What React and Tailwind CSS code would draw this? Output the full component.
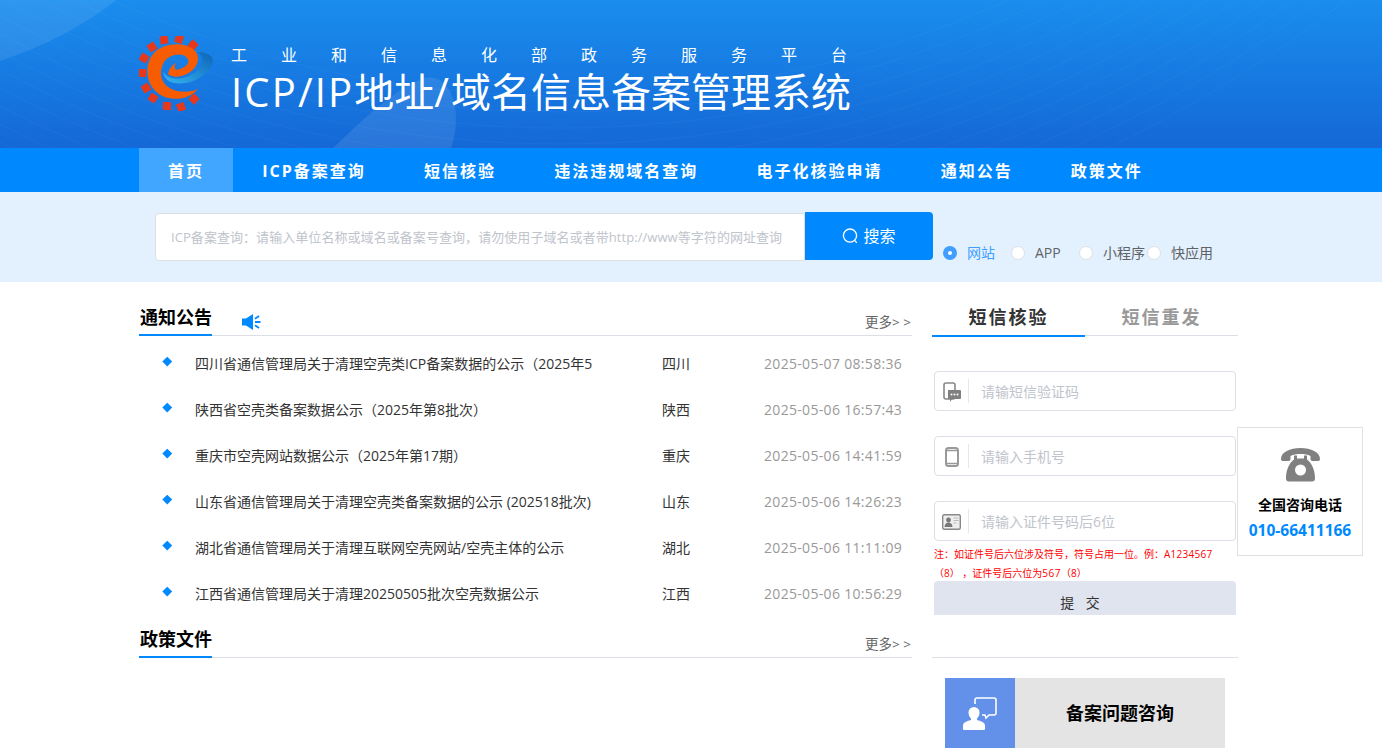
const navItems = ["首页", "ICP备案查询", "短信核验", "违法违规域名查询", "电子化核验申请", "通知公告", "政策文件"];

const notices = [
  ["四川省通信管理局关于清理空壳类ICP备案数据的公示（2025年5", "四川", "2025-05-07 08:58:36"],
  ["陕西省空壳类备案数据公示（2025年第8批次）", "陕西", "2025-05-06 16:57:43"],
  ["重庆市空壳网站数据公示（2025年第17期）", "重庆", "2025-05-06 14:41:59"],
  ["山东省通信管理局关于清理空壳类备案数据的公示 (202518批次)", "山东", "2025-05-06 14:26:23"],
  ["湖北省通信管理局关于清理互联网空壳网站/空壳主体的公示", "湖北", "2025-05-06 11:11:09"],
  ["江西省通信管理局关于清理20250505批次空壳数据公示", "江西", "2025-05-06 10:56:29"],
];

const radios = [
  ["网站", true, "w-[68px]"],
  ["APP", false, "w-[68px]"],
  ["小程序", false, "w-[68px]"],
  ["快应用", false, ""],
];

const teeth = [
  [25, 4], [40, 3], [54, 9], [13, 11], [5, 22], [3, 37], [7, 52], [14, 62], [28, 70], [42, 71], [55, 63],
];

const arcs = [0, 1, 2, 3, 4, 5, 6, 7, 8, 9, 10, 11];

function HeaderArt() {
  return (
    <svg className="absolute top-0 left-0" width="1382" height="148" viewBox="0 0 1382 148">
      <path d="M0 61C45 46 85 25 116 0H0z" fill="#fff" fillOpacity="0.09" />
      <path d="M333 148C365 118 395 88 425 78 445 74 456 95 456 118 456 130 454 140 451 148z" fill="#fff" fillOpacity="0.09" />
      {arcs.map((i) => (
        <circle
          key={i}
          cx="560"
          cy="-1000"
          r={1272 - i * 16}
          fill="#fff"
          fillOpacity="0.004"
          stroke="#fff"
          strokeOpacity="0.035"
        />
      ))}
    </svg>
  );
}

function Logo() {
  return (
    <svg width="75" height="75" viewBox="0 0 75 75" className="shrink-0">
      <defs>
        <linearGradient id="swoosh" x1="0" y1="1" x2="1" y2="0">
          <stop offset="0" stopColor="#35b4ef" />
          <stop offset="1" stopColor="#0c64b8" />
        </linearGradient>
      </defs>
      {teeth.map(([x, y]) => (
        <rect
          key={x + "-" + y}
          x={x - 4}
          y={y - 4}
          width="8"
          height="8"
          fill="#e8381c"
          transform={`rotate(${(Math.atan2(y - 37, x - 30) * 180) / Math.PI} ${x} ${y})`}
        />
      ))}
      <path
        d="M58 16C66 16 74 19 74 25 73 34 60 45 47 47 38 48 26 48 24 36 29 43 38 44 47 41 56 38 66 30 63 22 62 19 60 17 58 16z"
        fill="url(#swoosh)"
      />
      <path
        d="M59 53C50 64 32 66 20 58 6 48 5 28 15 17 26 6 46 6 55 14 62 20 60 32 48 38 42 41 33 42 29 38 30 33 33 29 37 27 34 32 36 35 41 33 49 30 52 25 47 21 41 16 30 19 25 26 20 35 21 45 29 51 38 57 50 57 59 53z"
        fill="#f75c03"
      />
    </svg>
  );
}

function SpeakerIcon() {
  return (
    <svg width="19" height="18" viewBox="0 0 19 18" fill="#0089ff">
      <path d="M0 5.5h4L11 1v16L4 12.5H0z" />
      <rect x="13" y="8" width="5.5" height="2" />
      <rect x="12.5" y="3.5" width="5" height="1.8" transform="rotate(-35 15 4.4)" />
      <rect x="12.5" y="12.7" width="5" height="1.8" transform="rotate(35 15 13.6)" />
    </svg>
  );
}

function SearchIcon() {
  return (
    <svg width="16" height="16" viewBox="0 0 16 16" fill="none" stroke="#fff" strokeWidth="1.3">
      <circle cx="8" cy="7.6" r="6.6" />
      <path d="M12.6 12.4l1.8 2" strokeLinecap="round" />
    </svg>
  );
}

function SmsIcon() {
  return (
    <svg width="18" height="20" viewBox="0 0 18 20" fill="none">
      <rect x="1" y="1" width="11" height="16" rx="2" stroke="#888" strokeWidth="1.6" />
      <path d="M5 8h12a1 1 0 0 1 1 1v7a1 1 0 0 1-1 1H9l-2 3v-3H5z" fill="#808080" />
      <circle cx="8.5" cy="12.5" r="1" fill="#fff" />
      <circle cx="11.5" cy="12.5" r="1" fill="#fff" />
      <circle cx="14.5" cy="12.5" r="1" fill="#fff" />
    </svg>
  );
}

function PhoneIcon() {
  return (
    <svg width="14" height="20" viewBox="0 0 14 20" fill="none">
      <rect x="1" y="1" width="12" height="18" rx="2.5" stroke="#999" strokeWidth="2" />
      <path d="M1 3.500h12M1 16.500h12" stroke="#999" strokeWidth="1.400" />
    </svg>
  );
}

function CardIcon() {
  return (
    <svg width="19" height="16" viewBox="0 0 19 16">
      <rect x="0.7" y="0.7" width="17.6" height="14.6" rx="1.5" fill="#eee" stroke="#888" strokeWidth="1.4" />
      <circle cx="6.5" cy="6" r="2.4" fill="#777" />
      <path d="M2.5 13c0-3 2-4.500 4-4.500s4 1.500 4 4.500z" fill="#777" />
      <path d="M11.500 4h5M11.500 6.500h5M11.500 9h3" stroke="#bbb" strokeWidth="1.100" />
    </svg>
  );
}

function TelephoneIcon() {
  return (
    <svg width="39" height="34" viewBox="0 0 39 34" fill="#808080">
      <path d="M0 11C0 4 9 0 19.500 0S39 4 39 11c0 1.500-1 2-2.500 2h-5c-1.500 0-2-1-2-2V8c-3-1.500-6-2-10-2s-7 .5-10 2v3c0 1-.5 2-2 2h-5C1 13 0 12.500 0 11z" />
      <path d="M13 7.500h3v3h7v-3h3v4c4 3 8 9 8 19 0 2-1 3-3 3H8c-2 0-3-1-3-3 0-10 4-16 8-19z" />
      <circle cx="19.500" cy="22" r="5.500" fill="#fff" />
    </svg>
  );
}

function ConsultIcon() {
  return (
    <svg width="34" height="33" viewBox="0 0 34 33" fill="#fff">
      <path d="M11 10a5.500 5.500 0 0 1 5.500 5.500c0 2.500-1 4.500-2.500 6v1.500c4 1 8 2.500 8 5.500v3c0 1-.5 1.500-1.500 1.500H1.500C.5 33 0 32.500 0 31.500v-3c0-3 4-4.500 8-5.500v-1.500c-1.500-1.500-2.500-3.500-2.500-6A5.500 5.500 0 0 1 11 10z" />
      <path
        d="M12 7V3a2 2 0 0 1 2-2h17a2 2 0 0 1 2 2v13a2 2 0 0 1-2 2h-5l-3 3-1-3h-3"
        fill="none"
        stroke="#fff"
        strokeWidth="1.600"
      />
    </svg>
  );
}

function SectionHead({ title, children }) {
  return (
    <div className="flex h-[36px] items-end justify-between border-b border-[#dcdfe6]">
      <div className="flex items-end">
        <h2 className="-mb-px h-[36px] w-[73px] border-b-2 border-[#0089ff] pt-[4px] pl-[1px] text-[18px] leading-[26px] font-bold whitespace-nowrap text-black">
          {title}
        </h2>
        {children}
      </div>
      <span className="mr-[1px] mb-[4px] text-[13.500px] leading-[18px] whitespace-pre text-[#666]">更多&gt; &gt;</span>
    </div>
  );
}

function Field({ icon, placeholder }) {
  return (
    <div className="flex h-[40px] items-center rounded border border-[#dcdfe6] bg-white">
      <div className="flex h-[24px] w-[34px] shrink-0 items-center justify-center border-r border-[#e4e7ed] pt-[2px]">
        {icon}
      </div>
      <span className="pl-[12px] text-[14px] text-[#c0c4cc]">{placeholder}</span>
    </div>
  );
}

export default function App() {
  return (
    <div className="relative h-[756px] overflow-hidden bg-white font-['Open_Sans','Noto_Sans_CJK_SC',sans-serif]">
      <header className="relative h-[148px] overflow-hidden bg-gradient-to-b from-[#1a8dee] to-[#1568d6]">
        <HeaderArt />
        <div className="relative flex items-start pt-[36px] pl-[139px]">
          <Logo />
          <div className="mt-[7px] ml-[17px] text-white">
            <p className="h-[24px] text-[16px] leading-[24px] tracking-[34px] whitespace-nowrap">工业和信息化部政务服务平台</p>
            <h1 className="mt-[2px] text-[40px] leading-[46px] whitespace-nowrap">
              <span className="tracking-[2.150px]">ICP/IP</span>地址<span className="tracking-[2px]">/</span>域名信息备案管理系统
            </h1>
          </div>
        </div>
      </header>

      <nav className="flex h-[44px] bg-[#0089ff] pl-[139px]">
        {navItems.map((item, i) => (
          <a
            key={item}
            className={`flex items-center px-[29.100px] pt-[1px] text-[16px] font-bold tracking-[2px] whitespace-nowrap text-white ${i === 0 ? "bg-[#40a6ff]" : ""}`}
          >
            {item}
          </a>
        ))}
      </nav>

      <section className="flex h-[90px] bg-[#e3f1ff] pt-[20px] pl-[155px]">
        <div className="mt-[1px] flex h-[48px] w-[650px] items-center rounded-l border border-[#dcdfe6] bg-white pt-[1px] pl-[15px]">
          <span className="text-[13px] tracking-[0.06px] whitespace-nowrap text-[#c0c4cc]">
            ICP备案查询：请输入单位名称或域名或备案号查询，请勿使用子域名或者带http://www等字符的网址查询
          </span>
        </div>
        <button className="flex h-[48px] w-[128px] items-center justify-center gap-[5px] rounded-r bg-[#0089ff] text-[16px] text-white">
          <SearchIcon />
          搜索
        </button>
        <div className="flex pt-[30px] pl-[10px]">
          {radios.map(([label, on, width]) => (
            <div key={label} className={`flex h-[20px] items-center ${width}`}>
              {on ? (
                <span className="mt-[1px] flex h-[14px] w-[14px] items-center justify-center rounded-full bg-[#409eff]">
                  <span className="h-[4px] w-[4px] rounded-full bg-white"></span>
                </span>
              ) : (
                <span className="mt-[1px] h-[14px] w-[14px] rounded-full border border-[#dcdfe6] bg-white"></span>
              )}
              <span className={`ml-[10px] text-[14px] whitespace-nowrap ${on ? "text-[#409eff]" : "text-[#606266]"}`}>{label}</span>
            </div>
          ))}
        </div>
      </section>

      <main className="ml-[139px] flex w-[1099px] justify-between pt-[18px]">
        <div className="w-[773px]">
          <SectionHead title="通知公告">
            <span className="mb-[4px] ml-[30px]">
              <SpeakerIcon />
            </span>
          </SectionHead>
          <ul className="pt-[5px]">
            {notices.map(([title, region, date]) => (
              <li key={date} className="flex h-[46px] items-center text-[14px] leading-[20px]">
                <span className="mb-[6px] ml-[25px] h-[6.500px] w-[6.500px] shrink-0 rotate-45 bg-[#0089ff]"></span>
                <span className="ml-[24.500px] w-[399px] shrink-0 whitespace-nowrap text-[#333]">{title}</span>
                <span className="mb-[1px] ml-[68px] w-[102px] shrink-0 text-[#333]">{region}</span>
                <span className="mb-[1px] tracking-[0.32px] text-[#999]">{date}</span>
              </li>
            ))}
          </ul>
          <div className="pt-[5px]">
            <SectionHead title="政策文件" />
          </div>
        </div>

        <aside className="w-[306px]">
          <div className="flex h-[36px] border-b border-[#dcdfe6]">
            <div className="-mb-px flex h-[37px] w-[153px] justify-center border-b-2 border-[#0089ff] pt-[4px] text-[18px] leading-[26px] font-bold tracking-[2px] text-[#333]">
              短信核验
            </div>
            <div className="flex w-[153px] justify-center pt-[4px] text-[18px] leading-[26px] font-bold tracking-[2px] text-[#999]">
              短信重发
            </div>
          </div>
          <div className="mx-[2px] flex flex-col gap-[25px] pt-[35px]">
            <Field icon={<SmsIcon />} placeholder="请输短信验证码" />
            <Field icon={<PhoneIcon />} placeholder="请输入手机号" />
            <Field icon={<CardIcon />} placeholder="请输入证件号码后6位" />
          </div>
          <p className="mx-[2px] mt-[4px] text-[10px] leading-[19px] whitespace-pre text-[#f00]">
            注：如证件号后六位涉及符号，符号占用一位。例：<span className="tracking-[0.25px]">A1234567</span>
            <br />
            （8） ，证件号后六位为<span className="tracking-[0.5px]">567</span>（8）
          </p>
          <div className="mx-[2px] -mt-[2px] h-[34px] overflow-hidden rounded-t bg-[#e0e4ef] pt-[11px] pr-[6px] text-center text-[14px] leading-[22px] tracking-[4px] text-[#333]">
            提 交
          </div>
          <div className="mt-[42px] border-t border-[#dcdfe6] px-[13px] pt-[20px]">
            <div className="flex h-[70px] w-[280px] bg-[#e4e4e4]">
              <div className="flex w-[70px] items-center justify-center bg-[#6391ea]">
                <ConsultIcon />
              </div>
              <div className="flex flex-1 items-center justify-center text-[18px] font-bold text-black">备案问题咨询</div>
            </div>
          </div>
        </aside>
      </main>

      <div className="absolute top-[427px] left-[1237px] flex h-[129px] w-[126px] flex-col items-center border border-[#e0e0e6] bg-white pt-[20px]">
        <TelephoneIcon />
        <p className="mt-[13px] text-[14px] leading-[20px] font-bold text-black">全国咨询电话</p>
        <p className="mt-[4px] text-[15.500px] leading-[22px] font-bold text-[#0089ff]">010-66411166</p>
      </div>
    </div>
  );
}
